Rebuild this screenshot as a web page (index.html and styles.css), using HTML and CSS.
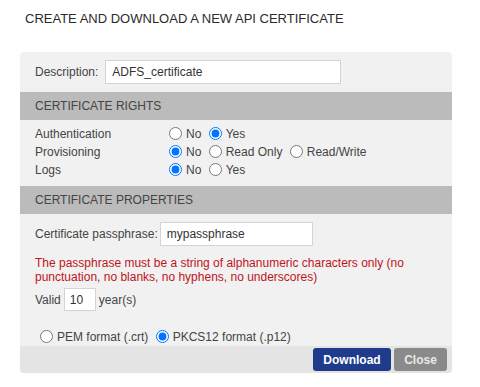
FILE: index.html
```html
<!DOCTYPE html>
<html lang="en">
<head>
  <meta charset="UTF-8">
  <title>Create API Certificate</title>
  <link rel="stylesheet" href="styles.css">
</head>
<body>
  <div class="dialog">
    <!-- Title -->
    <h2 class="dialog-title">CREATE AND DOWNLOAD A NEW API CERTIFICATE</h2>

    <div class="panel">
      <!-- Description -->
      <div class="section desc-row">
        <label for="description">Description:</label>
        <input type="text" id="description" class="text-input desc-input" value="ADFS_certificate">
      </div>

      <!-- Rights -->
      <div class="section-head">CERTIFICATE RIGHTS</div>
      <div class="section rights">
        <div class="right-name">Authentication</div>
        <div class="right-opts">
          <label><input type="radio" name="auth">No</label>
          <label><input type="radio" name="auth" checked>Yes</label>
        </div>
        <div class="right-name">Provisioning</div>
        <div class="right-opts">
          <label><input type="radio" name="prov" checked>No</label>
          <label><input type="radio" name="prov">Read Only</label>
          <label><input type="radio" name="prov">Read/Write</label>
        </div>
        <div class="right-name">Logs</div>
        <div class="right-opts">
          <label><input type="radio" name="logs" checked>No</label>
          <label><input type="radio" name="logs">Yes</label>
        </div>
      </div>

      <!-- Properties -->
      <div class="section-head">CERTIFICATE PROPERTIES</div>
      <div class="section props">
        <div class="pass-row">
          <label for="passphrase">Certificate passphrase:</label>
          <input type="text" id="passphrase" class="text-input pass-input" value="mypassphrase">
        </div>
        <p class="warning">The passphrase must be a string of alphanumeric characters only (no punctuation, no blanks, no hyphens, no underscores)</p>
        <div class="valid-row">
          <label for="valid">Valid</label>
          <input type="text" id="valid" class="text-input valid-input" value="10">
          <span>year(s)</span>
        </div>
        <div class="format-row">
          <label><input type="radio" name="format">PEM format (.crt)</label>
          <label><input type="radio" name="format" checked>PKCS12 format (.p12)</label>
        </div>
      </div>

      <!-- Buttons -->
      <div class="footer">
        <button class="btn btn-primary">Download</button>
        <button class="btn btn-close">Close</button>
      </div>
    </div>
  </div>
</body>
</html>
```

FILE: styles.css
```css
/* Global */
body {
  margin: 0;
  font-family: 'Liberation Sans', Arial, sans-serif;
  font-size: 12px;
  color: #444;
  background: #fff;
}

/* Dialog title */
.dialog-title {
  margin: 0;
  padding: 10px 0 0 25px;
  height: 42px;
  font-size: 13px;
  font-weight: normal;
  line-height: 18px;
  color: #2b2b2b;
}

/* Grey panel */
.panel {
  margin-left: 20px;
  width: 432px;
  background: #f1f1f1;
  border-radius: 4px;
  overflow: hidden;
}

.section {
  padding: 0 15px;
}

.section-head {
  height: 28px;
  line-height: 28px;
  padding-left: 15px;
  background: #bbbbbb;
  color: #444;
  font-size: 12px;
}

/* Inputs */
.text-input {
  box-sizing: border-box;
  height: 24px;
  margin: 0;
  padding: 0 6px;
  border: 1px solid #d4d4d4;
  background: #fff;
  font-family: inherit;
  font-size: 12px;
  color: #333;
  outline: none;
}

input[type="radio"] {
  width: 13px;
  height: 13px;
  margin: 0 4px 0 4px;
  vertical-align: -2px;
}

/* Description */
.desc-row {
  display: flex;
  align-items: center;
  gap: 7px;
  padding-top: 8px;
  padding-bottom: 8px;
}

.desc-input {
  width: 236px;
}

/* Rights grid */
.rights {
  display: grid;
  grid-template-columns: 130px 1fr;
  line-height: 18px;
  padding-top: 5px;
  padding-bottom: 7px;
}

/* Properties */
.props {
  padding-top: 8px;
}

.pass-row {
  display: flex;
  align-items: center;
  gap: 2px;
}

.pass-input {
  width: 153px;
}

.warning {
  margin: 10px 0 4px;
  line-height: 14px;
  color: #c0141c;
}

.valid-row {
  display: flex;
  align-items: center;
  gap: 3px;
}

.valid-input {
  width: 32px;
  height: 23px;
  padding: 0 5px;
}

.format-row {
  margin-top: 17px;
  margin-left: 1px;
  line-height: 18px;
}

/* Footer */
.footer {
  display: flex;
  justify-content: flex-end;
  gap: 3px;
  padding: 2px 5px 2px 0;
  background: #e4e4e4;
}

.btn {
  height: 23px;
  padding: 0 10px;
  border: none;
  border-radius: 3px;
  color: #fff;
  font-family: inherit;
  font-size: 12px;
  font-weight: bold;
  cursor: pointer;
}

.btn-primary {
  width: 78px;
  background: #1f3c8c;
}

.btn-close {
  width: 53px;
  background: #8a8a8a;
  color: #e8e8e8;
}
```
